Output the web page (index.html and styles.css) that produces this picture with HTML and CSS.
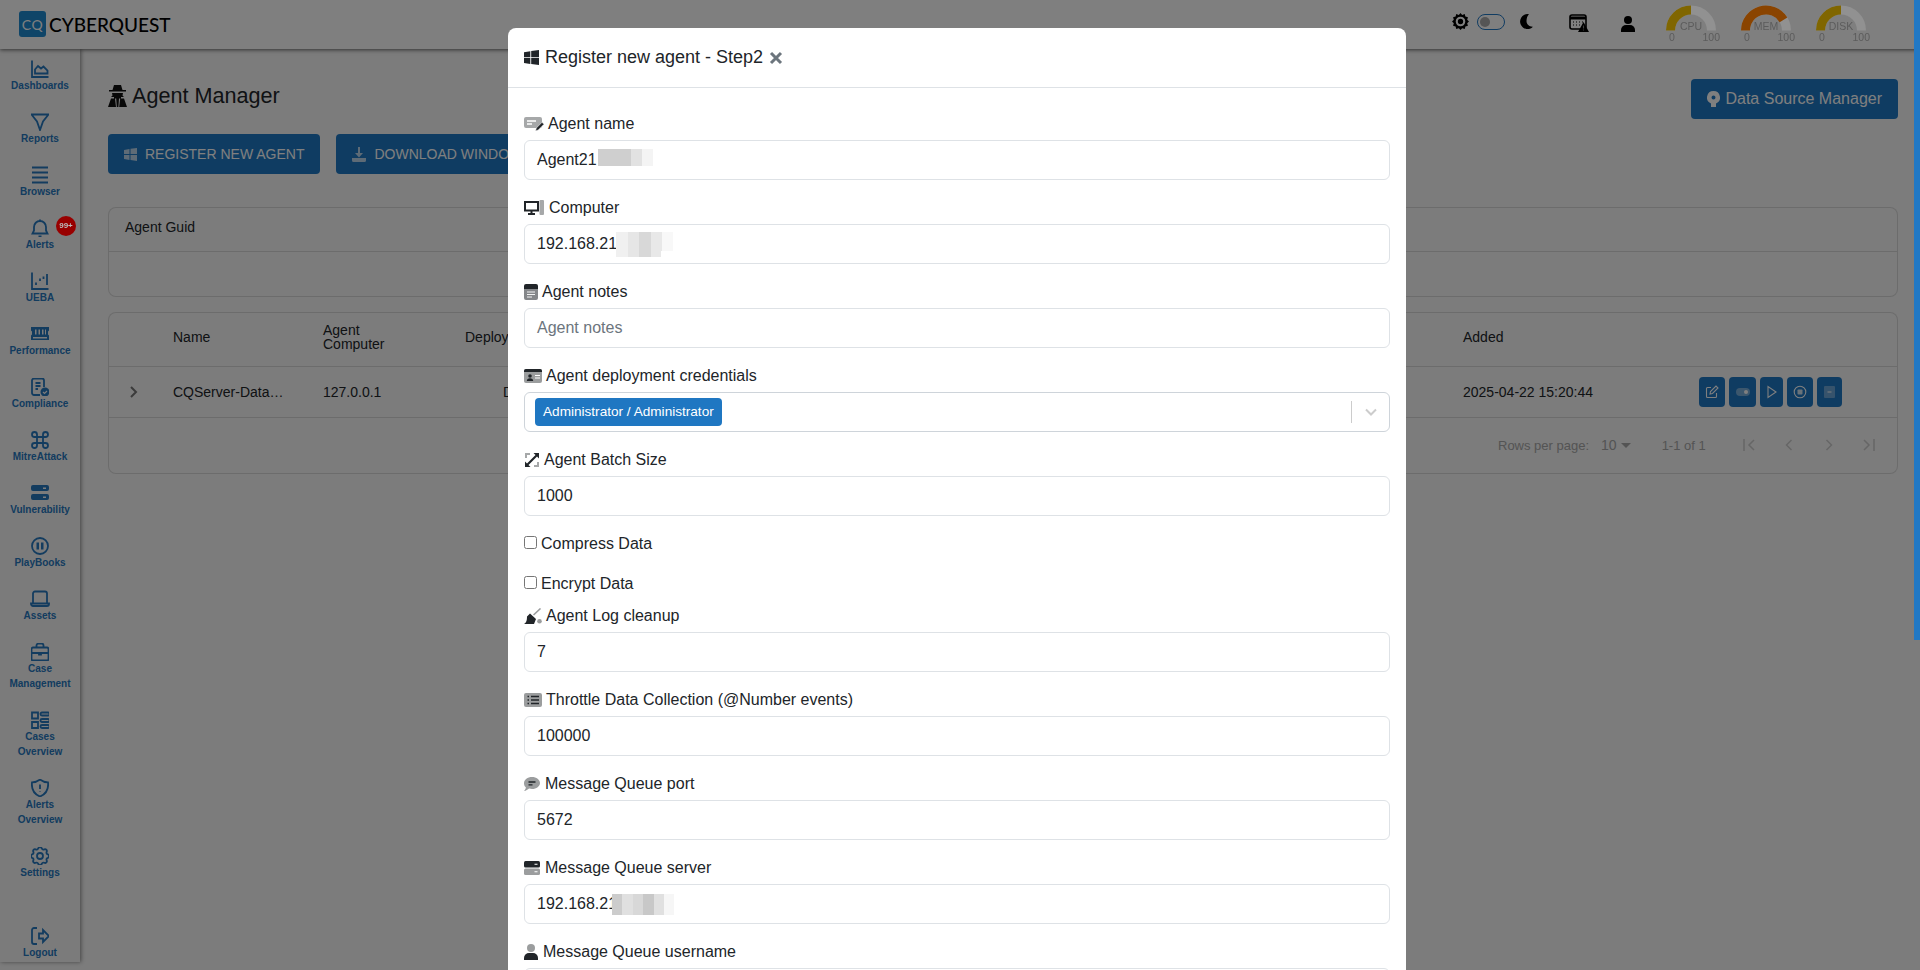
FILE: index.html
```html
<!DOCTYPE html>
<html lang="en">
<head>
<meta charset="UTF-8">
<meta name="viewport" content="width=device-width, initial-scale=1.0">
<title>Agent Manager</title>
<link rel="stylesheet" href="styles.css">
</head>
<body>
<header class="topbar">
  <div class="logo">
    <span class="logo-mark">CQ</span>
    <span class="logo-name">CYBERQUEST</span>
  </div>
  <div class="top-tools">
    <svg class="tool-gear" width="17" height="17" viewBox="0 0 16 16"><path fill="#000" fill-rule="evenodd" d="M8 0l1.600 1.900L12 1l.6 2.400L15 4l-.7 2.400L16 8l-1.700 1.600L15 12l-2.400.6L12 15l-2.400-.7L8 16l-1.600-1.700L4 15l-.6-2.400L1 12l.7-2.400L0 8l1.700-1.600L1 4l2.400-.6L4 1l2.400.9zM8 3.500a4.500 4.500 0 1 0 0 9 4.500 4.500 0 0 0 0-9zm0 2a2.500 2.500 0 1 1 0 5 2.500 2.500 0 0 1 0-5z"/></svg>
    <span class="toggle"><span class="toggle-knob"></span></span>
    <svg class="tool-moon" width="13" height="15" viewBox="0 0 13 15"><path fill="#000" d="M7.500 0a7.500 7.500 0 1 0 5.500 12.700C9.500 13 6.500 10.500 6.500 7 6.500 4 7.500 1.500 9 .2A7.500 7.500 0 0 0 7.500 0z"/></svg>
    <svg class="tool-cal" width="20" height="18" viewBox="0 0 20 18"><rect x="1" y="1" width="16" height="14" rx="2" fill="none" stroke="#000" stroke-width="1.600"/><path d="M1 4h16" stroke="#000" stroke-width="3"/><path d="M4 8h1m2 0h1m2 0h1m2 0h1M4 11h1m2 0h1m2 0h1" stroke="#000" stroke-width="1.200"/><path d="M14.500 8l5.500 10H9z" fill="#000"/><path d="M14.500 11.500v3m0 1v1" stroke="#808080" stroke-width="1.100"/></svg>
    <svg class="tool-user" width="14" height="16" viewBox="0 0 14 16"><circle cx="7" cy="4" r="4" fill="#000"/><path fill="#000" d="M0 16v-2a5 5 0 0 1 5-5h4a5 5 0 0 1 5 5v2z"/></svg>
    <div class="gauges">
      <div class="gauge">
        <svg width="50" height="29" viewBox="0 0 50 29"><path d="M4.500 28.500a20.500 20.500 0 0 1 41 0" fill="none" stroke="#919191" stroke-width="9"/><path d="M4.500 28.500A20.500 20.500 0 0 1 25 8" fill="none" stroke="#806600" stroke-width="9"/></svg>
        <span class="gauge-name">CPU</span>
        <div class="gauge-scale"><span>0</span><span>100</span></div>
      </div>
      <div class="gauge">
        <svg width="50" height="29" viewBox="0 0 50 29"><path d="M4.500 28.500a20.500 20.500 0 0 1 41 0" fill="none" stroke="#919191" stroke-width="9"/><path d="M4.500 28.500A20.500 20.500 0 0 1 42.500 17.800" fill="none" stroke="#8a4400" stroke-width="9"/></svg>
        <span class="gauge-name">MEM</span>
        <div class="gauge-scale"><span>0</span><span>100</span></div>
      </div>
      <div class="gauge">
        <svg width="50" height="29" viewBox="0 0 50 29"><path d="M4.500 28.500a20.500 20.500 0 0 1 41 0" fill="none" stroke="#919191" stroke-width="9"/><path d="M4.500 28.500A20.500 20.500 0 0 1 25 8" fill="none" stroke="#806600" stroke-width="9"/></svg>
        <span class="gauge-name">DISK</span>
        <div class="gauge-scale"><span>0</span><span>100</span></div>
      </div>
    </div>
  </div>
</header>

<div class="layout">
  <nav class="sidebar">
    <a class="nav-item"><svg viewBox="3 3 18 18"><path d="M4 3.500V20h16.500"/><path d="M7 16.500v-4l3-3.500 3 2.500 2.500-2 4 4v3z"/></svg><span>Dashboards</span></a>
    <a class="nav-item"><svg viewBox="3 3 18 18"><path d="M3.500 4.500h17L15 11.500l-3 8.500-3-8.500z"/></svg><span>Reports</span></a>
    <a class="nav-item"><svg viewBox="3 3 18 18"><path d="M4 4.500h16M4 9.500h16M4 14.500h16M4 19.500h16"/></svg><span>Browser</span></a>
    <a class="nav-item"><svg viewBox="3 3 18 18"><path d="M12 5a6 6 0 0 0-6 6v3.500L4.500 17.500h15L18 14.500V11a6 6 0 0 0-6-6zM12 3.500V5M10.500 20.500h3"/></svg><span>Alerts</span><b class="badge">99+</b></a>
    <a class="nav-item"><svg viewBox="3 3 18 18"><path d="M4 3.500V20h16.500"/><path d="M8 16v-2.500M12 12V9.500M15.500 10V7.500M19 16V5"/></svg><span>UEBA</span></a>
    <a class="nav-item"><svg viewBox="3 3 18 18"><path class="solid" fill-rule="evenodd" d="M3 5h18v3.500l-1 1v3l1 1V18H3v-4.500l1-1v-3l-1-1zm4 2.500v5h1.500v-5zm3.500 0v5H12v-5zm3.500 0v5h1.500v-5zm3 0v5h1v-5zM5 15v1.500h14V15z"/></svg><span>Performance</span></a>
    <a class="nav-item"><svg viewBox="3 3 18 18"><path d="M12 20H6a2 2 0 0 1-2-2V5.500a2 2 0 0 1 2-2h8a2 2 0 0 1 2 2V12M7.500 8h5M7.500 11h5M7.500 14h2.500"/><circle class="solid" cx="17" cy="17" r="4.500"/><path class="cut" d="M15 17l1.500 1.500L19 16"/></svg><span>Compliance</span></a>
    <a class="nav-item"><svg viewBox="3 3 18 18"><path d="M9 9h6v6H9zM9 9H6.500A2.500 2.500 0 1 1 9 6.500zM15 9V6.500A2.500 2.500 0 1 1 17.500 9zM15 15h2.500a2.500 2.500 0 1 1-2.500 2.500zM9 15v2.500A2.500 2.500 0 1 1 6.500 15z"/></svg><span>MitreAttack</span></a>
    <a class="nav-item"><svg viewBox="3 3 18 18"><path class="solid" fill-rule="evenodd" d="M5 4h14a2 2 0 0 1 2 2v2a2 2 0 0 1-2 2H5a2 2 0 0 1-2-2V6a2 2 0 0 1 2-2zm10 2.500V8h3V6.500zM5 13h14a2 2 0 0 1 2 2v2a2 2 0 0 1-2 2H5a2 2 0 0 1-2-2v-2a2 2 0 0 1 2-2zm10 2.500V17h3v-1.500z"/></svg><span>Vulnerability</span></a>
    <a class="nav-item"><svg viewBox="3 3 18 18"><circle cx="12" cy="12" r="8"/><path class="solid" d="M8.500 8.500h2.500v7H8.500zM13 8.500h2.500v7H13z"/></svg><span>PlayBooks</span></a>
    <a class="nav-item"><svg class="wide" viewBox="2 3 20 18"><path d="M5 16V6.500a2 2 0 0 1 2-2h10a2 2 0 0 1 2 2V16M3 16.500h18v.5a2 2 0 0 1-2 2H5a2 2 0 0 1-2-2z"/></svg><span>Assets</span></a>
    <a class="nav-item"><svg viewBox="3 3 18 18"><path d="M5 7.500h14a1.500 1.500 0 0 1 1.500 1.500v10a1.500 1.500 0 0 1-1.500 1.500H5A1.500 1.500 0 0 1 3.500 19V9A1.500 1.500 0 0 1 5 7.500zM8.500 7.500V5.500a2 2 0 0 1 2-2h3a2 2 0 0 1 2 2v2M3.500 13h17M11 13h2v1.500h-2z"/></svg><span>Case<br>Management</span></a>
    <a class="nav-item"><svg viewBox="3 3 18 18"><path d="M4 4.500h6v6H4zM4 14h6v6H4zM14 4.500h6a1 1 0 0 1 0 3h-6a1 1 0 0 1 0-3zM14 11h6a1 1 0 0 1 0 3h-6a1 1 0 0 1 0-3zM14 17h6a1 1 0 0 1 0 3h-6a1 1 0 0 1 0-3z"/></svg><span>Cases<br>Overview</span></a>
    <a class="nav-item"><svg viewBox="3 3 18 18"><path d="M12 3.500c2.500 2 5 2.800 8 2.800C20.800 13.500 18 18 12 20.500 6 18 3.200 13.500 4 6.300c3 0 5.500-.8 8-2.800zM12 8.500v4.500M12 15.500v.5"/></svg><span>Alerts<br>Overview</span></a>
    <a class="nav-item"><svg viewBox="3 3 18 18"><path d="M10.300 4.300a1.800 1.800 0 0 1 3.400 0 1.800 1.800 0 0 0 2.600 1.100 1.800 1.800 0 0 1 2.400 2.400 1.800 1.800 0 0 0 1.100 2.600 1.800 1.800 0 0 1 0 3.400 1.800 1.800 0 0 0-1.100 2.600 1.800 1.800 0 0 1-2.400 2.400 1.800 1.800 0 0 0-2.600 1.100 1.800 1.800 0 0 1-3.400 0 1.800 1.800 0 0 0-2.600-1.100 1.800 1.800 0 0 1-2.400-2.400 1.800 1.800 0 0 0-1.100-2.600 1.800 1.800 0 0 1 0-3.400 1.800 1.800 0 0 0 1.100-2.600 1.800 1.800 0 0 1 2.400-2.400 1.800 1.800 0 0 0 2.600-1.100z"/><circle cx="12" cy="12" r="3"/></svg><span>Settings</span></a>
    <a class="nav-item nav-logout"><svg viewBox="3 3 18 18"><path d="M9 4H6a2 2 0 0 0-2 2v12a2 2 0 0 0 2 2h3M11 9.500h4V6l6 6-6 6v-3.500h-4z"/></svg><span>Logout</span></a>
  </nav>

  <main class="content">
    <div class="page-head">
      <h1 class="page-title">
        <svg width="19" height="22" viewBox="0 0 19 22"><path fill="#111" fill-rule="evenodd" d="M6 0h7l1.500 5H18v1.500H1V5h3.500zM4 8h11l-.5 2.500L16 12h-3v1.500h3l3 8.500H0l3-8.500h3V12H3l1.500-1.500zm3 5.500l1 8.500h.8l-.6-8.500zm4 0l-.6 8.500h.8l1-8.500z"/></svg>
        Agent Manager
      </h1>
      <a class="btn btn-source">
        <svg width="13" height="16" viewBox="0 0 13 16"><path fill="#fff" fill-rule="evenodd" d="M6.500 0a6.500 6.500 0 0 1 2.500 12.500V16H4v-3.500A6.500 6.500 0 0 1 6.500 0zm0 4.500a2 2 0 1 0 0 4 2 2 0 0 0 0-4z"/></svg>
        Data Source Manager
      </a>
    </div>
    <div class="actions">
      <a class="btn btn-upper">
        <svg width="13" height="13" viewBox="0 0 13 13"><path fill="#fff" opacity=".7" d="M0 2l5.500-1v5H0zm6.500-1.200L13 0v6H6.500zM0 7h5.500v5L0 11zm6.500 0H13v6l-6.500-1z"/></svg>
        Register new agent
      </a>
      <a class="btn btn-upper">
        <svg width="14" height="15" viewBox="0 0 14 15"><path fill="#fff" opacity=".7" d="M6 0h2v6h3L7 10.500 3 6h3zM0 11h14v2.500a1.500 1.500 0 0 1-1.500 1.500h-11A1.500 1.500 0 0 1 0 13.500z"/></svg>
        Download Windows
      </a>
    </div>

    <section class="card card-guid">
      <div class="guid-head">Agent Guid</div>
    </section>

    <section class="card card-table">
      <div class="table-row table-head">
        <span></span>
        <span>Name</span>
        <span class="two-line">Agent<br>Computer</span>
        <span>Deploy</span>
        <span>Added</span>
        <span></span>
      </div>
      <div class="table-row table-data">
        <svg class="row-expand" width="10" height="14" viewBox="0 0 10 14"><path d="M2 2l5 5-5 5" fill="none" stroke="#777" stroke-width="2"/></svg>
        <span>CQServer-Data…</span>
        <span>127.0.0.1</span>
        <span class="cell-deploy">Default</span>
        <span>2025-04-22 15:20:44</span>
        <div class="row-actions">
          <a class="act act-edit"><svg width="14" height="14" viewBox="0 0 14 14"><path d="M6 2.500H2.500a1 1 0 0 0-1 1v8a1 1 0 0 0 1 1h8a1 1 0 0 0 1-1V8M5 9l.5-2.500L11 1l2 2-5.500 5.500z" fill="none" stroke="#fff" stroke-width="1.100"/></svg></a>
          <a class="act act-toggle"><svg width="14" height="8" viewBox="0 0 14 8"><rect width="14" height="8" rx="4" fill="#fff" opacity=".4"/><circle cx="10" cy="4" r="2" fill="#fff"/></svg></a>
          <a class="act act-play"><svg width="10" height="14" viewBox="0 0 10 14"><path d="M1 1.500v11l8-5.500z" fill="none" stroke="#fff" stroke-width="1.100"/></svg></a>
          <a class="act act-stop"><svg width="14" height="14" viewBox="0 0 14 14"><circle cx="7" cy="7" r="5.800" fill="none" stroke="#fff" stroke-width="1.100"/><rect x="4.500" y="4.500" width="5" height="5" rx=".8" fill="#fff" opacity=".8"/></svg></a>
          <a class="act act-remove"><svg width="11" height="12" viewBox="0 0 11 12"><rect width="11" height="12" rx="1" fill="#fff" opacity=".35"/><path d="M3.500 6h4" stroke="#fff"/></svg></a>
        </div>
      </div>
      <div class="pager">
        <span>Rows per page:</span>
        <span class="pager-size">10<i class="caret"></i></span>
        <span class="pager-range">1-1 of 1</span>
        <svg width="14" height="14" viewBox="0 0 14 14"><path d="M2 1v12M12 2L7 7l5 5" /></svg>
        <svg width="14" height="14" viewBox="0 0 14 14"><path d="M9.500 2L4.500 7l5 5"/></svg>
        <svg width="14" height="14" viewBox="0 0 14 14"><path d="M4.500 2l5 5-5 5"/></svg>
        <svg width="14" height="14" viewBox="0 0 14 14"><path d="M12 1v12M2 2l5 5-5 5"/></svg>
      </div>
    </section>
  </main>
</div>

<div class="overlay"></div>
<div class="scroll-thumb"></div>

<div class="modal">
  <div class="modal-head">
    <svg width="15" height="15" viewBox="0 0 15 15"><path fill="#212529" d="M0 2.200l6.300-1v6H0zM7.200 1L15 0v7.200H7.200zM0 8h6.300v6L0 13zm7.200 0H15v7l-7.800-1.100z"/></svg>
    <span class="modal-title">Register new agent - Step2</span>
    <svg class="modal-close" width="14" height="14" viewBox="0 0 14 14"><path d="M2 2l10 10m0-10L2 12" stroke="#6c757d" stroke-width="3"/></svg>
  </div>
  <form class="modal-body">
    <div class="field">
      <label><svg width="20" height="16" viewBox="0 0 20 16"><rect y="1" width="18" height="11" rx="2" fill="#212529" opacity=".4"/><path d="M3 5h9M3 8h5" stroke="#fff" stroke-width="1.300"/><path d="M11.500 15l.8-3 5.700-5.700 2 2-5.700 5.700z" fill="#212529" stroke="#fff" stroke-width=".6"/></svg>Agent name</label>
      <div class="control">Agent21<span class="mosaic mosaic-name"></span></div>
    </div>
    <div class="field">
      <label class="gap-5"><svg width="20" height="16" viewBox="0 0 20 16"><path d="M1 2h13v8.500H1zM4 14h7M7.500 11v3" fill="none" stroke="#212529" stroke-width="2"/><rect x="15.500" y="0" width="4.500" height="15" rx="1" fill="#212529" opacity=".4"/></svg>Computer</label>
      <div class="control">192.168.21<span class="mosaic mosaic-computer"></span></div>
    </div>
    <div class="field">
      <label><svg width="14" height="16" viewBox="0 0 14 16"><path d="M0 5h14v9a2 2 0 0 1-2 2H2a2 2 0 0 1-2-2z" fill="#212529" opacity=".55"/><path d="M2 0h10a2 2 0 0 1 2 2v3H0V2a2 2 0 0 1 2-2z" fill="#212529"/><path d="M3 8h8M3 10.500h8M3 13h5" stroke="#fff" stroke-width=".9"/></svg>Agent notes</label>
      <div class="control control-empty">Agent notes</div>
    </div>
    <div class="field">
      <label><svg width="18" height="14" viewBox="0 0 18 14"><rect width="18" height="14" rx="2" fill="#212529" opacity=".45"/><path d="M2 0h14a2 2 0 0 1 2 2v1H0V2a2 2 0 0 1 2-2z" fill="#212529"/><circle cx="6" cy="7" r="1.800" fill="#212529"/><path d="M2.800 12c0-2 1.400-2.800 3.200-2.800s3.200.8 3.200 2.800z" fill="#212529"/><path d="M11 6.500h5M11 9h5" stroke="#fff"/></svg>Agent deployment credentials</label>
      <div class="control control-select">
        <span class="tag">Administrator / Administrator</span>
        <span class="select-sep"></span>
        <svg class="select-arrow" width="14" height="10" viewBox="0 0 14 10"><path d="M2 2.500l5 5 5-5" fill="none" stroke="#ccc" stroke-width="2"/></svg>
      </div>
    </div>
    <div class="field">
      <label><svg width="16" height="16" viewBox="0 0 16 16"><path d="M1 1h5v2H3v3H1zM15 15h-5v-2h3v-3h2z" fill="#212529" opacity=".4"/><path d="M9.500 1H15v5.500l-2-2L4.500 13l2 2H1V9.500l2 2L11.500 3z" fill="#212529"/></svg>Agent Batch Size</label>
      <div class="control">1000</div>
    </div>
    <label class="check"><input type="checkbox">Compress Data</label>
    <label class="check check-last"><input type="checkbox">Encrypt Data</label>
    <div class="field">
      <label><svg width="18" height="16" viewBox="0 0 18 16"><path d="M9.500 7l7-6.500" stroke="#212529" stroke-width="1.600" opacity=".45"/><circle cx="15.500" cy="13.300" r="2.300" fill="#212529" opacity=".45"/><path d="M6 5.500l6 5.500-2 5H0c2-1 3-3 3-7.500z" fill="#212529"/></svg>Agent Log cleanup</label>
      <div class="control">7</div>
    </div>
    <div class="field">
      <label><svg width="18" height="14" viewBox="0 0 18 14"><rect width="18" height="14" rx="2" fill="#212529" opacity=".45"/><path d="M3.500 3.500h1.500M3.500 7h1.500M3.500 10.500h1.500M7 3.500h8M7 7h8M7 10.500h8" stroke="#212529" stroke-width="1.500"/></svg>Throttle Data Collection (@Number events)</label>
      <div class="control">100000</div>
    </div>
    <div class="field">
      <label class="gap-5"><svg width="16" height="14" viewBox="0 0 16 14"><path d="M8 0c4.400 0 8 2.700 8 6s-3.600 6-8 6c-1 0-2-.1-2.900-.4C3.800 12.700 2 14 0 14c1-1 1.700-2.200 1.900-3.500A5.300 5.300 0 0 1 0 6c0-3.300 3.600-6 8-6z" fill="#212529" opacity=".45"/><path d="M4.500 5h7M4.500 7.800h4" stroke="#212529" stroke-width="1.300"/></svg>Message Queue port</label>
      <div class="control">5672</div>
    </div>
    <div class="field">
      <label class="gap-5"><svg width="16" height="14" viewBox="0 0 16 14"><rect width="16" height="6.500" rx="1.500" fill="#212529"/><rect y="7.500" width="16" height="6.500" rx="1.500" fill="#212529" opacity=".45"/><path d="M10.500 3.200h3M10.500 10.700h3" stroke="#fff" stroke-width="1.100"/></svg>Message Queue server</label>
      <div class="control">192.168.21<span class="mosaic mosaic-server"></span></div>
    </div>
    <div class="field">
      <label class="gap-5"><svg width="14" height="16" viewBox="0 0 14 16"><circle cx="7" cy="4" r="4" fill="#212529" opacity=".45"/><path d="M0 16v-2a5 5 0 0 1 5-5h4a5 5 0 0 1 5 5v2z" fill="#212529"/></svg>Message Queue username</label>
      <div class="control"></div>
    </div>
  </form>
</div>
</body>
</html>
```

FILE: styles.css
```css
/* page frame */
* {
  box-sizing: border-box;
}
html, body {
  height: 970px;
  margin: 0;
  overflow: hidden;
}
body {
  font-family: "Liberation Sans", Arial, sans-serif;
  font-size: 14px;
  color: #212529;
  background: #f8f8f8;
}

/* top bar */
.topbar {
  display: flex;
  justify-content: space-between;
  align-items: center;
  height: 49px;
  padding: 0 54px 0 19px;
  background: #fff;
  box-shadow: 0 1px 4px rgba(0, 0, 0, 0.6);
  position: relative;
}
.logo {
  display: flex;
  align-items: center;
  gap: 3px;
  margin-top: -1px;
}
.logo-mark {
  width: 27px;
  height: 26px;
  display: flex;
  align-items: center;
  justify-content: center;
  border-radius: 3px;
  background: #1e8ad0;
  color: #fff;
  font-family: Lato, sans-serif;
  font-size: 14px;
  letter-spacing: 0.5px;
}
.logo-name {
  font-family: Lato, sans-serif;
  font-size: 19px;
  font-weight: 500;
  color: #000;
}
.top-tools {
  display: flex;
  align-items: center;
}
.tool-gear {
  margin-top: -7px;
}
.toggle {
  width: 28px;
  height: 16px;
  margin: -6px 0 0 8px;
  padding: 2px;
  border: 1px solid #2178c4;
  border-radius: 8px;
}
.toggle-knob {
  display: block;
  width: 10px;
  height: 10px;
  border-radius: 50%;
  background: #aaa;
}
.tool-moon {
  margin: -7px 0 0 15px;
}
.tool-cal {
  margin: -3px 0 0 36px;
}
.tool-user {
  margin: -2px 0 0 32px;
}
.gauges {
  display: flex;
  gap: 25px;
  margin-left: 31px;
}
.gauge {
  width: 50px;
  height: 43px;
  position: relative;
  z-index: 20;
}
.gauge svg {
  display: block;
  margin-top: -1px;
}
.gauge-name {
  position: absolute;
  top: 17px;
  left: 0;
  width: 100%;
  text-align: center;
  font-size: 10.5px;
  color: #5c5c5c;
}
.gauge-scale {
  display: flex;
  justify-content: space-between;
  margin: 0 -4px 0 3px;
  font-size: 10.5px;
  color: #5c5c5c;
}

/* sidebar */
.layout {
  display: flex;
}
.sidebar {
  width: 80px;
  height: 913px;
  flex: none;
  display: flex;
  flex-direction: column;
  align-items: center;
  padding-top: 11px;
  background: #f6f6f6;
  box-shadow: 1px 0 4px rgba(0, 0, 0, 0.45);
}
.nav-item {
  display: flex;
  flex-direction: column;
  align-items: center;
  width: 100%;
  margin-bottom: 20px;
  position: relative;
  color: #2678bf;
  font-size: 10px;
  font-weight: 700;
  line-height: 15px;
  text-align: center;
}
.nav-item svg {
  width: 18px;
  height: 18px;
  fill: none;
  stroke: currentColor;
  stroke-width: 1.800;
}
.nav-item svg.wide {
  width: 20px;
}
.nav-item svg .solid {
  fill: currentColor;
  stroke: none;
}
.nav-item svg .cut {
  stroke: #f6f6f6;
  stroke-width: 1.200;
}
.nav-logout {
  margin: auto 0 2px;
}
.badge {
  position: absolute;
  top: -3px;
  left: 56px;
  width: 20px;
  height: 20px;
  border-radius: 50%;
  background: #980000;
  color: #bbb;
  font-size: 8px;
  line-height: 20px;
  z-index: 20;
}

/* main content */
.content {
  flex: 1;
  padding: 30px 22px 0 28px;
}
.page-head {
  display: flex;
  justify-content: space-between;
  align-items: center;
  height: 40px;
}
.page-title {
  display: flex;
  align-items: center;
  gap: 5px;
  margin: 0;
  padding-bottom: 6px;
  font-size: 21.6px;
  font-weight: 400;
  color: #212529;
}
.actions {
  display: flex;
  gap: 16px;
  margin-top: 15px;
}
.btn {
  display: flex;
  align-items: center;
  height: 40px;
  border-radius: 4px;
  background: #1e78c4;
  color: #fff;
}
.btn-upper {
  gap: 8px;
  padding: 0 16px;
  font-size: 14px;
  text-transform: uppercase;
}
.btn-source {
  gap: 5px;
  padding: 0 16px;
  font-size: 16px;
}
.card {
  border: 1px solid rgba(0, 0, 0, 0.12);
  border-radius: 8px;
  background: #f8f8f8;
}
.card-guid {
  height: 90px;
  margin-top: 33px;
}
.guid-head {
  height: 44px;
  padding-left: 16px;
  line-height: 38px;
  border-bottom: 1px solid rgba(0, 0, 0, 0.12);
}
.card-table {
  height: 162px;
  margin-top: 15px;
}
.table-row {
  display: grid;
  grid-template-columns: 64px 150px 142px 998px 236px 1fr;
  align-items: center;
  border-bottom: 1px solid rgba(0, 0, 0, 0.12);
}
.table-head {
  height: 54px;
  padding-bottom: 5px;
}
.two-line {
  line-height: 14px;
}
.table-data {
  height: 51px;
}
.row-expand {
  margin-left: 20px;
}
.cell-deploy {
  padding-left: 38px;
}
.row-actions {
  display: flex;
  gap: 4px;
}
.act {
  display: flex;
  align-items: center;
  justify-content: center;
  width: 26px;
  height: 30px;
  border-radius: 4px;
  background: #1e78c4;
}
.act-toggle {
  width: 27px;
}
.act-play {
  width: 23px;
}
.act-remove {
  width: 25px;
}
.pager {
  display: flex;
  align-items: center;
  height: 56px;
  padding: 0 0 2px 1389px;
  font-size: 13px;
  color: #a8a8a8;
}
.pager svg {
  fill: none;
  stroke: #ccc;
  stroke-width: 1.500;
  margin-left: 26px;
}
.pager svg:first-of-type {
  margin-left: 36px;
}
.pager-size {
  display: flex;
  align-items: center;
  margin-left: 12px;
  font-size: 14px;
}
.caret {
  width: 0;
  height: 0;
  margin-left: 4px;
  border: 5px solid transparent;
  border-top-color: #a8a8a8;
  border-bottom: 0;
}
.pager-range {
  margin-left: 31px;
}

/* modal over the dimmed page */
.overlay {
  position: fixed;
  inset: 0;
  background: rgba(0, 0, 0, 0.5);
  z-index: 10;
}
.scroll-thumb {
  position: fixed;
  top: 0;
  right: 0;
  width: 6px;
  height: 640px;
  background: #2178c4;
  z-index: 30;
}
.modal {
  position: absolute;
  top: 28px;
  left: 508px;
  width: 898px;
  border-radius: 8px;
  background: #fff;
  z-index: 40;
}
.modal-head {
  display: flex;
  align-items: center;
  gap: 6px;
  height: 60px;
  padding: 0 16px;
  border-bottom: 1px solid #dee2e6;
}
.modal-title {
  font-size: 18px;
}
.modal-close {
  margin-top: 1px;
}
.modal-body {
  padding: 23px 16px;
}
.field {
  margin-bottom: 15px;
}
.field label {
  display: flex;
  align-items: center;
  gap: 4px;
  height: 24px;
  margin-bottom: 5px;
  padding-top: 2px;
  font-size: 16px;
}
.field label.gap-5 {
  gap: 5px;
}
.control {
  display: flex;
  align-items: center;
  height: 40px;
  padding: 0 12px;
  position: relative;
  border: 1px solid #dee2e6;
  border-radius: 6px;
  font-size: 16px;
  color: #212529;
}
.control-empty {
  color: #6c757d;
}
.control-select {
  padding: 0 0 0 10px;
  border-color: #ced4da;
}
.tag {
  height: 28px;
  padding: 0 8px;
  border-radius: 4px;
  background: #1f77c2;
  color: #fff;
  font-size: 13.6px;
  line-height: 28px;
}
.select-sep {
  width: 1px;
  height: 22px;
  margin-left: auto;
  background: #ccc;
}
.select-arrow {
  margin: 0 11px 0 12px;
}
.mosaic {
  position: absolute;
}
.mosaic-name {
  left: 73px;
  top: 8px;
  width: 55px;
  height: 17px;
  background: linear-gradient(90deg, #cfcfcf 0 33px, #e2e2e2 33px 44px, #f4f4f4 44px);
}
.mosaic-computer {
  left: 91px;
  top: 7px;
  width: 57px;
  height: 25px;
  background:
    linear-gradient(#fff 0 0) left 45px bottom 0 / 12px 6px no-repeat,
    linear-gradient(90deg, #f0f0f0 0 12px, #e6e6e6 12px 23px, #d8d8d8 23px 35px, #e8e8e8 35px 46px, #f8f8f8 46px);
}
.mosaic-server {
  left: 87px;
  top: 9px;
  width: 62px;
  height: 21px;
  background: linear-gradient(90deg, #ccc 0 10px, #e0e0e0 10px 21px, #d8d8d8 21px 31px, #c8c8c8 31px 42px, #e0e0e0 42px 52px, #f6f6f6 52px);
}
.check {
  display: flex;
  align-items: center;
  height: 24px;
  margin-bottom: 16px;
  padding-top: 2px;
  font-size: 16px;
}
.check input {
  width: 13px;
  height: 13px;
  margin: -3px 4px 0 0;
}
.check-last {
  margin-bottom: 8px;
}
```
